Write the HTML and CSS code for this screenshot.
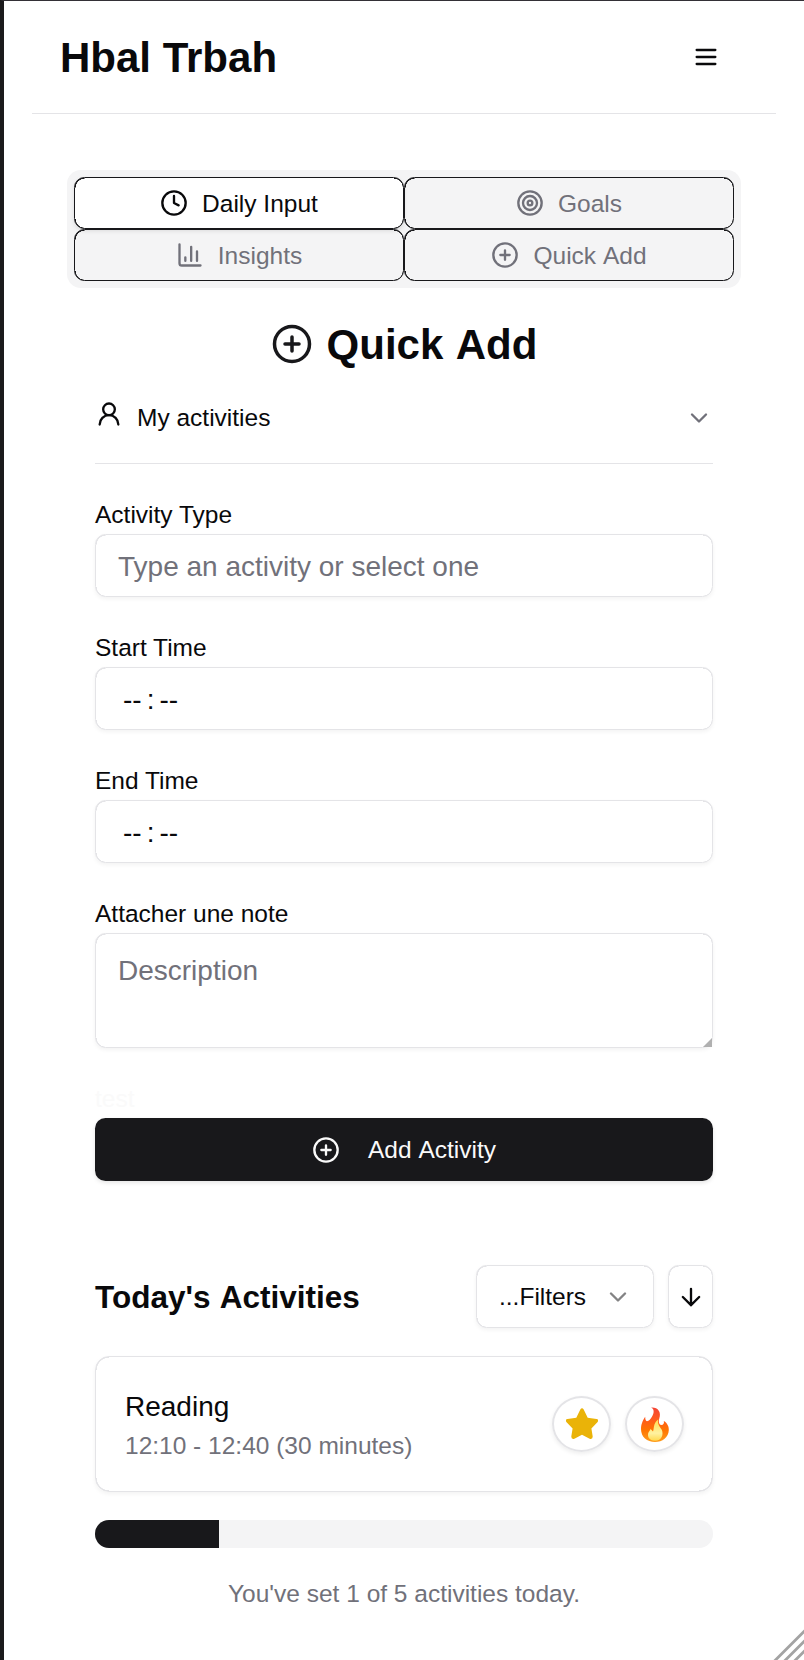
FILE: index.html
```html
<!DOCTYPE html>
<html lang="en">
<head>
<meta charset="utf-8">
<title>Hbal Trbah</title>
<link rel="stylesheet" href="styles.css">
</head>
<body>
<div class="app">
  <header class="header">
    <h1 class="title">Hbal Trbah</h1>
    <svg class="icon" viewBox="0 0 24 24"><path d="M4 6h16M4 12h16M4 18h16"/></svg>
  </header>
  <nav class="tabs">
    <button class="tab corners tab-active"><svg class="icon" viewBox="0 0 24 24"><circle cx="12" cy="12" r="10"/><path d="M12 6v6l4 2"/></svg><span>Daily Input</span></button>
    <button class="tab corners"><svg class="icon" viewBox="0 0 24 24"><circle cx="12" cy="12" r="10"/><circle cx="12" cy="12" r="6"/><circle cx="12" cy="12" r="2"/></svg><span>Goals</span></button>
    <button class="tab corners"><svg class="icon" viewBox="0 0 24 24"><path d="M3 3v16a2 2 0 0 0 2 2h16M18 17V9M13 17V5M8 17v-3"/></svg><span>Insights</span></button>
    <button class="tab corners"><svg class="icon" viewBox="0 0 24 24"><circle cx="12" cy="12" r="10"/><path d="M8 12h8M12 8v8"/></svg><span class="spaced">Quick Add</span></button>
  </nav>
  <main class="content">
    <div class="section-title">
      <svg class="icon icon-large" viewBox="0 0 24 24"><circle cx="12" cy="12" r="10"/><path d="M8 12h8M12 8v8"/></svg>
      <h2 class="title spaced">Quick Add</h2>
    </div>
    <div class="accordion">
      <svg class="icon icon-user" viewBox="0 0 24 24"><circle cx="12" cy="8" r="5"/><path d="M20 21a8 8 0 0 0-16 0"/></svg>
      <span class="accordion-label">My activities</span>
      <svg class="icon icon-muted" viewBox="0 0 24 24"><path d="m6 9 6 6 6-6"/></svg>
    </div>
    <form class="form">
      <div class="field"><label class="label">Activity Type</label><div class="input corners placeholder">Type an activity or select one</div></div>
      <div class="field"><label class="label">Start Time</label><div class="input corners time"><span>--</span><span>:</span><span>--</span></div></div>
      <div class="field"><label class="label">End Time</label><div class="input corners time"><span>--</span><span>:</span><span>--</span></div></div>
      <div class="field note"><label class="label">Attacher une note</label><textarea class="input corners textarea" placeholder="Description"></textarea><svg class="note-grip" viewBox="0 0 9 9"><path d="M9 0V9H0Z"/></svg></div>
      <div class="field"><span class="label label-faint">test</span><button type="button" class="submit"><svg class="icon" viewBox="0 0 24 24"><circle cx="12" cy="12" r="10"/><path d="M8 12h8M12 8v8"/></svg><span class="spaced">Add Activity</span></button></div>
    </form>
    <div class="list-head">
      <h3 class="list-title spaced">Today's Activities</h3>
      <button class="outline corners filter"><span>...Filters</span><svg class="icon icon-dim" viewBox="0 0 24 24"><path d="m6 9 6 6 6-6"/></svg></button>
      <button class="outline corners sort"><svg class="icon" viewBox="0 0 24 24"><path d="M12 5v14M19 12l-7 7-7-7"/></svg></button>
    </div>
    <article class="card corners">
      <div class="card-text"><div class="card-name">Reading</div><div class="card-time">12:10 - 12:40 (30 minutes)</div></div>
      <span class="badge"><svg class="star" viewBox="0 0 32 31"><path d="M14.3 1.5Q16-1.2 17.7 1.5L21.7 9.7L30.5 11Q33.3 11.7 31.4 14.2L25.4 20.6L26.7 28.5Q26.7 31.7 23.6 30.7L16 26.8L8.4 30.7Q5.3 31.7 5.3 28.5L6.6 20.6L.6 14.2Q-1.3 11.7 1.5 11L10.3 9.7Z"/></svg></span>
      <span class="badge"><svg class="fire" viewBox="0 0 28 35">
        <defs>
          <linearGradient id="flame" x1="0" y1="0" x2="0" y2="1"><stop offset="0" stop-color="#f44336"/><stop offset=".35" stop-color="#ff5a1c"/><stop offset=".65" stop-color="#ff7400"/><stop offset="1" stop-color="#ff9d1c"/></linearGradient>
          <linearGradient id="core" x1="0" y1="0" x2="0" y2="1"><stop offset="0" stop-color="#ffe04d"/><stop offset=".65" stop-color="#fff1a0"/><stop offset="1" stop-color="#ffd94f"/></linearGradient>
        </defs>
        <path fill="url(#flame)" d="M10.2.4C17 0 20.500 5 18.300 11.500C17.200 15 18.200 18 20.300 18C22.500 18 23.400 16 22.800 14C26.500 16 28 20 27.800 23C27.500 30.500 21.500 35 14 35C6 35 0 30 0 22C0 16.500 2.500 12.500 4.200 9.800C4.200 12 4.600 14.300 6 14.300C8 14.200 9.600 12 11.200 9.300C13.200 5.800 13.400 2 10.200.4Z"/>
        <path fill="url(#core)" d="M17.300 12.300C15.800 17 19.500 20.500 20.900 23C22.600 27.500 21 33.800 14 33.800C7.800 33.800 6 29 7.500 25.500C8.200 24 9.500 23 9.400 21.800C11 23 11.500 24.500 12 24.400C13.500 22 11.500 17 17.300 12.300Z"/>
      </svg></span>
    </article>
    <div class="progress"><div class="progress-fill" style="width:20%"></div></div>
    <p class="summary">You've set 1 of 5 activities today.</p>
  </main>
</div>
<svg class="grip" viewBox="0 0 32 32"><path d="M1.5 34 34 1.500M11.500 34 34 11.500M21.500 34 34 21.500"/></svg>
</body>
</html>
```
FILE: styles.css
```css
* { box-sizing: border-box; }
html { overflow: hidden; }
body {
  margin: 0;
  height: 1660px;
  border-top: 1px solid #333036;
  border-left: 4px solid #1b1a1c;
  background: #fff;
  color: #09090b;
  font: 24.5px/35px "Liberation Sans", Arial, sans-serif;
}
h1, h2, h3, p { margin: 0; }
button { font: inherit; color: inherit; padding: 0; background: none; border: 0; }
.app { padding: 0 28px; }
.icon {
  display: block;
  flex: none;
  width: 28px;
  height: 28px;
  fill: none;
  stroke: currentColor;
  stroke-width: 2;
  stroke-linecap: round;
  stroke-linejoin: round;
}
.spaced { word-spacing: .055em; }
/* one-pixel outline with slightly heavier rounded corners */
.corners {
  --line: #e4e4e7;
  --r: 10.5px;
  --inner: calc(var(--r) - 2px);
  --edge: calc(var(--r) - 1.5px);
  --tile: calc(var(--r) - 1px);
  border: 1px solid var(--line);
  border-radius: var(--r);
  background-image:
    radial-gradient(circle at 100% 100%, transparent var(--inner), var(--line) var(--edge)),
    radial-gradient(circle at 0 100%, transparent var(--inner), var(--line) var(--edge)),
    radial-gradient(circle at 100% 0, transparent var(--inner), var(--line) var(--edge)),
    radial-gradient(circle at 0 0, transparent var(--inner), var(--line) var(--edge));
  background-position: left top, right top, left bottom, right bottom;
  background-size: var(--tile) var(--tile);
  background-repeat: no-repeat;
}
.header {
  display: flex;
  align-items: center;
  justify-content: space-between;
  height: 113px;
  padding: 0 56px 0 28px;
  border-bottom: 1px solid #e4e4e7;
}
.title { padding-top: 2px; font-size: 42px; line-height: 56px; font-weight: 700; }
.tabs {
  display: grid;
  grid-template-columns: 1fr 1fr;
  margin: 56px 35px 0;
  padding: 7px;
  border-radius: 14px;
  background: #f4f4f5;
  color: #71717a;
}
.tab {
  --line: #18181b;
  display: flex;
  align-items: center;
  justify-content: center;
  gap: 14px;
  height: 52px;
}
.tab-active { background-color: #fff; color: #09090b; box-shadow: 0 2px 4px rgba(0, 0, 0, .1); }
.content { width: 618px; margin: 28px 63px 0; }
.section-title { display: flex; align-items: center; justify-content: center; gap: 14px; height: 56px; }
.icon-large { width: 42px; height: 42px; color: #18181b; }
.accordion {
  display: flex;
  align-items: center;
  gap: 14px;
  height: 92px;
  border-bottom: 1px solid #e4e4e7;
}
.icon-user { margin-bottom: 8px; }
.accordion-label { flex: 1; }
.icon-muted { color: #71717a; }
.icon-dim { opacity: .5; }
.form { display: flex; flex-direction: column; gap: 35px; margin-top: 35px; }
.field { display: flex; flex-direction: column; }
.label { height: 35px; line-height: 31px; }
.label-faint { color: #fafafa; }
.input {
  height: 63px;
  padding: 0 22px;
  box-shadow: 0 2px 4px rgba(0, 0, 0, .05);
  font-size: 28px;
  line-height: 63px;
}
.placeholder, .textarea::placeholder { color: #71717a; }
.time { display: flex; gap: 5px; padding-left: 27px; }
.note { position: relative; }
.textarea {
  height: 115px;
  padding: 16px 22px;
  font-family: inherit;
  line-height: 42px;
  background-color: transparent;
  resize: none;
}
.note-grip { position: absolute; right: 1px; bottom: 1px; width: 9px; height: 9px; fill: #b0b0b0; }
.submit {
  display: flex;
  align-items: center;
  justify-content: center;
  gap: 28px;
  height: 63px;
  border-radius: 10.5px;
  background: #18181b;
  color: #fafafa;
  box-shadow: 0 2px 4px rgba(0, 0, 0, .1);
}
.list-head { display: flex; align-items: center; gap: 14px; margin-top: 84px; }
.list-title { flex: 1; padding-top: 2px; font-size: 31.5px; line-height: 49px; font-weight: 700; }
.outline {
  display: flex;
  align-items: center;
  height: 63px;
  box-shadow: 0 2px 4px rgba(0, 0, 0, .05);
}
.filter { justify-content: space-between; width: 178px; padding: 0 21px 0 22px; }
.sort { justify-content: center; width: 45px; }
.card {
  --r: 14px;
  display: flex;
  align-items: center;
  gap: 14px;
  height: 136px;
  margin-top: 28px;
  padding: 0 28px 0 29px;
  box-shadow: 0 2px 4px rgba(0, 0, 0, .05);
}
.card-text { flex: 1; }
.card-name { font-size: 28px; line-height: 42px; }
.card-time { color: #71717a; }
.badge {
  display: flex;
  align-items: center;
  justify-content: center;
  width: 59px;
  height: 56px;
  border: 2px solid #e4e4e7;
  border-radius: 50%;
  box-shadow: 0 2px 4px rgba(0, 0, 0, .07);
}
.star { width: 32px; height: 31px; margin-bottom: 1px; fill: #eab308; }
.fire { width: 28px; height: 35px; }
.progress { height: 28px; margin-top: 28px; overflow: hidden; border-radius: 14px; background: #f4f4f5; }
.progress-fill { height: 100%; background: #18181b; }
.summary { margin-top: 28px; text-align: center; color: #71717a; }
/* window resize handle, over the page corner */
.grip {
  position: absolute;
  right: 0;
  bottom: 0;
  width: 32px;
  height: 32px;
  fill: none;
  stroke: #a3a3a3;
  stroke-width: 2.8;
}
```
